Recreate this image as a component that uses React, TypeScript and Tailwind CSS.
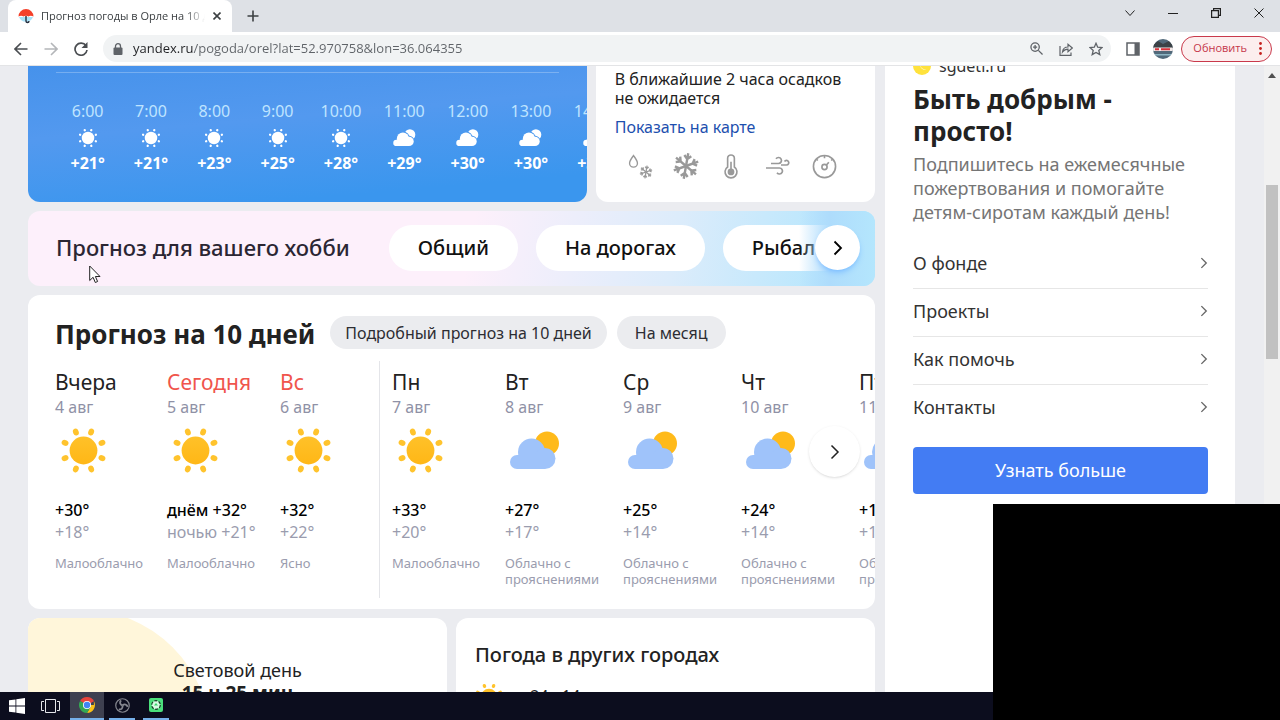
import React from "react";

type Day = {
  name: string;
  date: string;
  icon: "sun" | "cloud";
  day: string;
  night: string;
  text: string;
  red?: boolean;
  size: string;
};

const hours = [
  { time: "6:00", icon: "sun", temp: "+21°" },
  { time: "7:00", icon: "sun", temp: "+21°" },
  { time: "8:00", icon: "sun", temp: "+23°" },
  { time: "9:00", icon: "sun", temp: "+25°" },
  { time: "10:00", icon: "sun", temp: "+28°" },
  { time: "11:00", icon: "cloud", temp: "+29°" },
  { time: "12:00", icon: "cloud", temp: "+30°" },
  { time: "13:00", icon: "cloud", temp: "+30°" },
  { time: "14:00", icon: "cloud", temp: "+31°" },
];

const days: Day[] = [
  { name: "Вчера", date: "4 авг", icon: "sun", day: "+30°", night: "+18°", text: "Малооблачно", size: "w-28" },
  { name: "Сегодня", date: "5 авг", icon: "sun", day: "днём +32°", night: "ночью +21°", text: "Малооблачно", red: true, size: "w-[113px]" },
  { name: "Вс", date: "6 авг", icon: "sun", day: "+32°", night: "+22°", text: "Ясно", red: true, size: "w-[100px] border-r border-[#e4e5e9]" },
  { name: "Пн", date: "7 авг", icon: "sun", day: "+33°", night: "+20°", text: "Малооблачно", size: "w-[125px] pl-3" },
  { name: "Вт", date: "8 авг", icon: "cloud", day: "+27°", night: "+17°", text: "Облачно с прояснениями", size: "w-[118px]" },
  { name: "Ср", date: "9 авг", icon: "cloud", day: "+25°", night: "+14°", text: "Облачно с прояснениями", size: "w-[118px]" },
  { name: "Чт", date: "10 авг", icon: "cloud", day: "+24°", night: "+14°", text: "Облачно с прояснениями", size: "w-[118px]" },
  { name: "Пт", date: "11 авг", icon: "cloud", day: "+18°", night: "+12°", text: "Облачно с прояснениями", size: "w-[118px]" },
];

const fundLinks = ["О фонде", "Проекты", "Как помочь", "Контакты"];

const RAYS = [22.5, 67.5, 112.5, 157.5, 202.5, 247.5, 292.5, 337.5];

function Sun({ className, white }: { className: string; white?: boolean }) {
  const id = React.useId();
  return (
    <svg viewBox="0 0 48 48" className={className} fill={white ? "#fff" : `url(#${id})`} aria-hidden="true">
      <linearGradient id={id} gradientUnits="userSpaceOnUse" x1="24" y1="2" x2="24" y2="46">
        <stop offset="0" stopColor="#ffc42e" />
        <stop offset="1" stopColor="#ffb411" />
      </linearGradient>
      <circle cx="24" cy="24" r={white ? 15 : 14.2} />
      {RAYS.map((a) => (
        <ellipse key={a} cx="24" cy="3.6" rx="2.9" ry={white ? 2.9 : 3.6} transform={`rotate(${a} 24 24)`} />
      ))}
    </svg>
  );
}

function Cloud({ className, white }: { className: string; white?: boolean }) {
  const id = React.useId();
  const shape = (
    <>
      <circle cx="7" cy="31" r="7" />
      <circle cx="21.5" cy="21" r="13.5" />
      <circle cx="35" cy="27.5" r="10.5" />
      <path d="M7 24h28v14H7z" />
    </>
  );
  return (
    <svg viewBox="0 0 50 40" className={className} aria-hidden="true">
      <mask id={id}>
        <path d="M-5-5h60v50H-5z" fill="#fff" />
        {white && (
          <g fill="#000" stroke="#000" strokeWidth="4">
            {shape}
          </g>
        )}
      </mask>
      <circle cx="37" cy="12.5" r="12" fill={white ? "#fff" : "#ffba1a"} mask={`url(#${id})`} />
      <g fill={white ? "#fff" : "#9fc3fa"}>{shape}</g>
    </svg>
  );
}

function Flake({ className, width }: { className: string; width: number }) {
  return (
    <svg viewBox="0 0 28 28" className={className} fill="none" stroke="currentColor" strokeWidth={width} aria-hidden="true">
      {[10, 70, 130, 190, 250, 310].map((a) => (
        <path key={a} d="M14 14V1M10.500 3.500 14 7l3.500-3.500" transform={`rotate(${a} 14 14)`} />
      ))}
    </svg>
  );
}

function Chevron({ className, width = 2 }: { className: string; width?: number }) {
  return (
    <svg viewBox="0 0 10 16" className={className} fill="none" stroke="currentColor" strokeWidth={width} aria-hidden="true">
      <path d="m1.500 1.500 6.500 6.500-6.500 6.500" />
    </svg>
  );
}

function TabStrip() {
  return (
    <div className="flex h-8 items-end bg-[#dee1e6] pl-2">
      <div className="flex h-8 w-56 items-center rounded-t-lg bg-white pl-[10px] pr-[7px]">
        <svg viewBox="0 0 16 16" className="size-4 shrink-0" aria-hidden="true">
          <path d="M1 9a7.500 7.500 0 0 0 14 0z" fill="#a9e2f8" />
          <path d="M.500 8.500a7.500 7.500 0 0 1 15 0c-2-1.200-4-.9-5 0-1.500-1-3.500-1-5 0-1.200-1-3.500-1-5 0z" fill="#f4402a" />
          <path d="M8 8v5a1.500 1.500 0 0 0 3 0" fill="none" stroke="#26303f" strokeWidth="1.400" />
        </svg>
        <span className="ml-[7px] flex-1 overflow-hidden whitespace-nowrap text-[11px] text-[#3c4043] [mask-image:linear-gradient(to_right,#000_88%,transparent)]">
          Прогноз погоды в Орле на 10 дней
        </span>
        <button aria-label="Закрыть вкладку" className="ml-1 grid size-4 place-items-center text-[#3c4043]">
          <svg viewBox="0 0 8 8" className="size-2" stroke="currentColor" strokeWidth="1.600">
            <path d="m.500.500 7 7m0-7-7 7" />
          </svg>
        </button>
      </div>
      <button aria-label="Новая вкладка" className="ml-[15px] grid h-8 w-3 place-items-center text-[#3c4043]">
        <svg viewBox="0 0 12 12" className="size-3" stroke="currentColor" strokeWidth="1.600">
          <path d="M6 .500v11M.500 6h11" />
        </svg>
      </button>
      <div className="ml-auto flex h-8 text-[#222]">
        <button aria-label="Поиск вкладок" className="grid w-[43px] place-items-center pb-[6px]">
          <svg viewBox="0 0 12 12" className="size-3" fill="none" stroke="currentColor">
            <path d="m1.500 3.500 4.500 5 4.500-5" />
          </svg>
        </button>
        <button aria-label="Свернуть" className="grid w-[43px] place-items-center pb-[6px]">
          <svg viewBox="0 0 10 10" className="size-[10px]" stroke="currentColor">
            <path d="M0 5.500h10" />
          </svg>
        </button>
        <button aria-label="Восстановить" className="grid w-[43px] place-items-center pb-[6px]">
          <svg viewBox="0 0 10 10" className="size-[10px]" fill="none" stroke="currentColor" strokeWidth="1.200">
            <path d="M.600 2.600h6.800v6.800H.600zM2.600 2.600v-2h6.800v6.800h-2" />
          </svg>
        </button>
        <button aria-label="Закрыть" className="grid w-[43px] place-items-center pb-[6px]">
          <svg viewBox="0 0 10 10" className="size-[10px]" stroke="currentColor">
            <path d="m.500.500 9 9m0-9-9 9" />
          </svg>
        </button>
      </div>
    </div>
  );
}

function Toolbar() {
  return (
    <div className="flex h-[34px] items-center border-b border-[#e3e4e6] bg-white pl-[6px] pr-2 text-[#5f6368]">
      <button aria-label="Назад" className="grid w-[30px] place-items-center text-[#4a4d51]">
        <svg viewBox="0 0 14 14" className="size-[14px]" fill="none" stroke="currentColor" strokeWidth="1.600">
          <path d="M13.500 7H1.500M7 1 1 7l6 6" />
        </svg>
      </button>
      <button aria-label="Вперёд" className="grid w-[30px] place-items-center text-[#b4b6b9]">
        <svg viewBox="0 0 14 14" className="size-[14px]" fill="none" stroke="currentColor" strokeWidth="1.600">
          <path d="M.500 7h12M7 1l6 6-6 6" />
        </svg>
      </button>
      <button aria-label="Обновить страницу" className="grid w-[30px] place-items-center text-[#4a4d51]">
        <svg viewBox="0 0 14 14" className="size-[14px]" fill="none" stroke="currentColor" strokeWidth="1.700">
          <path d="M12 3.800A6 6 0 1 0 13 8" />
          <path d="M13.500 0v6h-6z" fill="currentColor" stroke="none" />
        </svg>
      </button>
      <div className="ml-[7px] flex h-[27px] flex-1 items-center rounded-full bg-[#f1f3f4] pl-[10px]">
        <svg viewBox="0 0 10 12" className="h-3 w-[10px] shrink-0" aria-hidden="true">
          <path d="M2.500 5V3.200a2.500 2.500 0 0 1 5 0V5" fill="none" stroke="currentColor" strokeWidth="1.300" />
          <rect x=".500" y="4.500" width="9" height="7.500" rx="1" fill="currentColor" />
        </svg>
        <input
          aria-label="Адресная строка"
          defaultValue="yandex.ru/pogoda/orel?lat=52.970758&lon=36.064355"
          className="ml-[10px] min-w-0 flex-1 bg-[linear-gradient(to_right,#202124_60px,#5f6368_60px)] bg-clip-text text-[13px] text-transparent outline-none"
        />
        <button aria-label="Масштаб" className="grid w-[30px] place-items-center">
          <svg viewBox="0 0 14 14" className="size-[13px]" fill="none" stroke="currentColor" strokeWidth="1.400">
            <circle cx="5.500" cy="5.500" r="4.500" />
            <path d="m9 9 4.500 4.500M5.500 3.300v4.400M3.300 5.500h4.400" />
          </svg>
        </button>
        <button aria-label="Поделиться" className="grid w-[30px] place-items-center">
          <svg viewBox="0 0 14 14" className="size-[14px]" fill="none" stroke="currentColor" strokeWidth="1.200">
            <path d="M1 4v9.300h11V10.500" />
            <path d="M3.500 10c.4-3.500 2.500-5 5.500-5V2.300L13.300 6 9 9.700V7.200c-2.300 0-4 .8-5.500 2.800z" />
          </svg>
        </button>
        <button aria-label="Добавить в закладки" className="grid w-[30px] place-items-center">
          <svg viewBox="0 0 14 14" className="size-[14px]" fill="none" stroke="currentColor" strokeWidth="1.300">
            <path d="m7 1.300 1.700 3.900 4.300.4-3.200 2.800 1 4.200L7 10.400l-3.800 2.200 1-4.200L1 5.600l4.300-.4z" />
          </svg>
        </button>
      </div>
      <button aria-label="Боковая панель" className="ml-[7px] grid w-[30px] place-items-center">
        <svg viewBox="0 0 14 14" className="size-[14px]" aria-hidden="true">
          <path d="M1 1h12v12H1z" fill="none" stroke="currentColor" strokeWidth="1.500" />
          <path d="M8.500 1H13v12H8.500z" fill="currentColor" />
        </svg>
      </button>
      <button aria-label="Профиль" className="grid w-[30px] place-items-center">
        <svg viewBox="0 0 20 20" className="size-5 overflow-hidden rounded-full" aria-hidden="true">
          <path d="M0 0h20v20H0z" fill="#51697a" />
          <path d="M0 6 5 2l5 3 6-3 4 4v3H0z" fill="#3b4247" />
          <path d="M0 8.500h20V12H0z" fill="#f3e9e9" />
          <path d="M2 9.300h4v2H2zM8 9.300h9v2H8z" fill="#d8333c" />
          <path d="M0 15h20v1.500H0z" fill="#8eb6c4" />
        </svg>
      </button>
      <button className="ml-[3px] flex h-[26px] items-center gap-3 rounded-full border border-[#c9394b] bg-[#fceeee] pl-[11px] pr-[9px] text-[11px] text-[#c5364a]">
        Обновить
        <svg viewBox="0 0 3 13" className="h-[13px] w-[3px]" fill="#c5221f" aria-hidden="true">
          <circle cx="1.500" cy="1.500" r="1.400" />
          <circle cx="1.500" cy="6.500" r="1.400" />
          <circle cx="1.500" cy="11.500" r="1.400" />
        </svg>
      </button>
    </div>
  );
}

function HourlyCard() {
  return (
    <section className="h-[136px] overflow-hidden rounded-b-xl bg-[linear-gradient(175deg,#4692eb_0%,#5399ef_40%,#3a96ee_85%)] px-7 pt-[6px]">
      <div className="h-px bg-white/25" />
      <ul className="grid w-[570px] grid-cols-9 pt-[26px]">
        {hours.map((h) => (
          <li key={h.time} className="flex flex-col items-center text-white">
            <span className="text-base leading-6 text-[#bfe4ff]">{h.time}</span>
            <span className="grid h-[30px] place-items-center">
              {h.icon === "sun" ? <Sun white className="size-5" /> : <Cloud white className="h-[18px] w-[23px]" />}
            </span>
            <span className="text-base font-bold leading-5">{h.temp}</span>
          </li>
        ))}
      </ul>
    </section>
  );
}

function PrecipitationCard() {
  return (
    <section className="h-[136px] rounded-b-xl bg-white px-[19px] pt-1 text-[#222]">
      <p className="text-base leading-[19px]">
        В ближайшие 2 часа осадков
        <br />
        не ожидается
      </p>
      <a href="#map" className="mt-[9px] block text-base leading-5 text-[#1d4fae]">
        Показать на карте
      </a>
      <div className="mt-[15px] flex items-center pl-[13px] text-[#999]">
        <button aria-label="Осадки" className="grid w-[44px] place-items-start">
          <span className="flex">
            <svg viewBox="0 0 12 16" className="h-[15px] w-[11px]" fill="none" stroke="currentColor" strokeWidth="1.500">
              <path d="M6 1.500c2.500 3.500 4.300 5.800 4.300 8.300a4.300 4.300 0 0 1-8.600 0C1.700 7.300 3.500 5 6 1.500z" />
            </svg>
            <Flake width={2.600} className="mt-[11px] size-[14px]" />
          </span>
        </button>
        <button aria-label="Снег" className="w-[51px]">
          <Flake width={2.400} className="size-[28px]" />
        </button>
        <button aria-label="Температура" className="w-[42px]">
          <svg viewBox="0 0 16 26" className="h-[25px] w-4" fill="none" stroke="currentColor" strokeWidth="1.700">
            <path d="M4.500 13.500V4.500a3.500 3.500 0 0 1 7 0v9a6.200 6.200 0 1 1-7 0z" />
            <path d="M8 8v10" />
            <circle cx="8" cy="18.700" r="3.500" fill="currentColor" stroke="none" />
          </svg>
        </button>
        <button aria-label="Ветер" className="w-[47px]">
          <svg viewBox="0 0 26 20" className="h-5 w-[26px]" fill="none" stroke="currentColor" strokeWidth="1.700">
            <path d="M6 7.500h7.500a3 3 0 1 0-2.500-4.700M1 12h13.500a3 3 0 1 1-2.500 4.700M16 9h5.500a2.300 2.300 0 1 0-2-3.500" />
          </svg>
        </button>
        <button aria-label="Давление">
          <svg viewBox="0 0 26 26" className="size-[25px]" fill="none" stroke="currentColor" strokeWidth="1.700">
            <circle cx="13" cy="13" r="11.500" />
            <circle cx="13" cy="13.500" r="2.700" />
            <path d="m14.800 11.800 2.700-3.300M13 2v2.500M4.800 5.500 6 6.800M21.200 5.500 20 6.800" />
          </svg>
        </button>
      </div>
    </section>
  );
}

function HobbyBar() {
  return (
    <section className="relative flex h-[75px] items-center overflow-hidden rounded-xl bg-[linear-gradient(100deg,#fdf0fb_0%,#fdf0fb_52%,#dcecfb_76%,#b4e6fd_96%)] pb-[2px] pl-7">
      <h2 className="shrink-0 text-[22px] font-medium text-[#2b2633]">Прогноз для вашего хобби</h2>
      <div className="ml-[39px] flex shrink-0 gap-[18px] text-xl font-medium text-[#111]">
        <button className="h-[46px] rounded-full bg-white px-[29px]">Общий</button>
        <button className="h-[46px] rounded-full bg-white px-[29px]">На дорогах</button>
        <button className="h-[46px] rounded-full bg-white px-[29px]">Рыбалка</button>
      </div>
      <div className="absolute inset-y-0 right-0 w-[76px] bg-[linear-gradient(to_right,transparent,#aedcfc_40%,#b4e6fd)]" />
      <button aria-label="Дальше" className="absolute right-[15px] grid size-[45px] place-items-center rounded-full bg-white text-black shadow-md shadow-blue-400/40">
        <Chevron width={1.800} className="h-4 w-[10px]" />
      </button>
    </section>
  );
}

function TenDays() {
  return (
    <section className="relative h-[314px] overflow-hidden rounded-xl bg-white pl-[27px] pt-[21px]">
      <div className="flex h-[33px] items-center">
        <h2 className="pt-[3px] text-[26px] font-bold text-[#222]">Прогноз на 10 дней</h2>
        <a href="#details" className="ml-[15px] flex h-[33px] items-center rounded-full bg-[#ebecef] px-[15px] text-base text-[#2d2d33]">
          Подробный прогноз на 10 дней
        </a>
        <a href="#month" className="ml-[10px] flex h-[33px] items-center rounded-full bg-[#ebecef] px-[18px] text-base text-[#2d2d33]">
          На месяц
        </a>
      </div>
      <ul className="mt-3 flex h-[237px]">
        {days.map((d) => (
          <li key={d.date} className={`shrink-0 pt-2 ${d.size}`}>
            <div className={`text-[21px] leading-[26px] ${d.red ? "text-[#f0554c]" : "text-[#222]"}`}>{d.name}</div>
            <div className="text-base leading-6 text-[#8f91a6]">{d.date}</div>
            <div className="flex h-[63px] items-center pl-[5px]">
              {d.icon === "sun" ? <Sun className="size-[47px]" /> : <Cloud className="h-10 w-[50px]" />}
            </div>
            <div className="mt-[17px] text-base font-medium leading-[22px] text-black">{d.day}</div>
            <div className="text-base leading-[22px] text-[#9a9cae]">{d.night}</div>
            <div className="mt-3 w-[100px] text-[13px] leading-4 text-[#9a9cae]">{d.text}</div>
          </li>
        ))}
      </ul>
      <button aria-label="Следующие дни" className="absolute right-[15px] top-[131px] grid size-[51px] place-items-center rounded-full bg-white text-[#222] shadow">
        <Chevron width={1.500} className="h-4 w-[10px]" />
      </button>
    </section>
  );
}

function FundPanel() {
  return (
    <aside className="w-[350px] shrink-0 overflow-hidden bg-white pl-7 pr-[27px] text-[#333]">
      <div className="-mt-3 flex h-6 items-center gap-2">
        <svg viewBox="0 0 20 20" className="size-[18px]" aria-hidden="true">
          <circle cx="10" cy="10" r="10" fill="#ffe23c" />
          <path d="M8 7a6 6 0 0 0 8 7 6.500 6.500 0 0 1-8-7z" fill="#fff9d6" />
        </svg>
        <span className="text-base leading-5">sgdeti.ru</span>
      </div>
      <h2 className="mt-[5px] text-[26px] font-bold leading-8 text-[#222]">
        Быть добрым -
        <br />
        просто!
      </h2>
      <p className="mt-[5px] text-lg leading-6 text-[#757575]">
        Подпишитесь на ежемесячные
        <br />
        пожертвования и помогайте
        <br />
        детям-сиротам каждый день!
      </p>
      <nav className="mt-[17px] divide-y divide-[#e6e6e6]">
        {fundLinks.map((l) => (
          <a key={l} href="#fund" className="flex h-12 items-center justify-between pb-1 text-lg">
            {l}
            <Chevron width={1.800} className="h-3 w-2 text-[#666]" />
          </a>
        ))}
      </nav>
      <button className="mt-[14px] h-[47px] w-full rounded bg-[#437cf3] pb-[2px] text-lg text-white">Узнать больше</button>
    </aside>
  );
}

function Taskbar() {
  return (
    <footer className="flex h-7 shrink-0 items-stretch bg-[#0c0d1e]">
      <button aria-label="Пуск" className="grid w-[34px] place-items-center">
        <svg viewBox="0 0 16 16" className="size-4" fill="#fff">
          <path d="M0 2.300 6.500 1.400v6.200H0zM7.300 1.300 16 0v7.600H7.300zM0 8.400h6.500v6.200L0 13.700zM7.300 8.400H16V16l-8.700-1.300z" />
        </svg>
      </button>
      <button aria-label="Представление задач" className="grid w-9 place-items-center pr-[3px]">
        <svg viewBox="0 0 19 14" className="h-[14px] w-[19px]" fill="none" stroke="#e5e6ea">
          <path d="M4.500.500h10v13h-10zM3 2.500H.500v9H3M16 2.500h2.500v9H16" />
        </svg>
      </button>
      <button aria-label="Chrome" className="grid w-[34px] place-items-center border-b-2 border-[#76b0ea] bg-[#3e4050]">
        <svg viewBox="0 0 16 16" className="size-4">
          <path d="M8 8 1.070 4A8 8 0 0 1 14.930 4z" fill="#e8453c" />
          <path d="M8 8h6.900V4A8 8 0 0 1 8 16l3.500-6z" fill="#fbc116" />
          <path d="M8 8 1.070 4A8 8 0 0 0 8 16l3.500-6z" fill="#34a853" />
          <path d="M8 4h6.930L8 8z" fill="#e8453c" />
          <circle cx="8" cy="8" r="4" fill="#fff" />
          <circle cx="8" cy="8" r="3.200" fill="#4285f4" />
        </svg>
      </button>
      <button aria-label="OBS" className="ml-[5px] grid w-[26px] place-items-center border-b-2 border-[#76b0ea]">
        <svg viewBox="0 0 16 16" className="size-[15px]" fill="none" stroke="#84868e">
          <circle cx="8" cy="8" r="7.200" strokeWidth="1.300" />
          {[0, 120, 240].map((a) => (
            <path key={a} d="M8 8C5.200 7.200 4.600 4.500 6.500 2.500" strokeWidth="2" transform={`rotate(${a} 8 8)`} />
          ))}
        </svg>
      </button>
      <button aria-label="Запись" className="ml-2 grid w-[26px] place-items-center border-b-2 border-[#76b0ea]">
        <svg viewBox="0 0 14 14" className="size-[14px]">
          <rect width="14" height="14" rx="2" fill="#4be07c" />
          <circle cx="7" cy="7" r="4.300" fill="#d9fbe4" />
          <circle cx="7" cy="7" r="4.300" fill="none" stroke="#173c24" strokeWidth="1.200" strokeDasharray="3 1.500" />
          <path d="M5 7.500 7 5l2 2.500z" fill="#3bd36a" />
        </svg>
      </button>
    </footer>
  );
}

export default function App() {
  return (
    <div className="relative flex h-screen flex-col overflow-hidden bg-white font-['Noto_Sans','Open_Sans',sans-serif]">
      <header className="shrink-0 font-['Open_Sans','Noto_Sans',sans-serif]">
        <TabStrip />
        <Toolbar />
      </header>

      <div className="flex min-h-0 flex-1 bg-[#ebecf0]">
        <main className="flex min-w-0 flex-1 flex-col gap-[9px] overflow-hidden pl-7 pr-[10px]">
          <div className="grid shrink-0 grid-cols-[minmax(0,2fr)_minmax(0,1fr)] gap-[9px]">
            <HourlyCard />
            <PrecipitationCard />
          </div>
          <div className="shrink-0">
            <HobbyBar />
          </div>
          <div className="shrink-0">
            <TenDays />
          </div>
          <div className="grid shrink-0 grid-cols-2 gap-[9px]">
            <section className="relative h-40 overflow-hidden rounded-xl bg-white pt-10 text-center text-lg leading-6 text-[#222]">
              <svg viewBox="0 0 200 160" className="absolute left-0 top-0 h-40 w-[200px]" aria-hidden="true">
                <circle cx="52" cy="122" r="131" fill="#fff6da" />
              </svg>
              <div className="relative">Световой день</div>
              <div className="relative text-[19px] font-bold leading-[22px]">15 ч 25 мин</div>
            </section>
            <section className="h-40 rounded-xl bg-white px-[19px] pt-[25px] text-[#222]">
              <h3 className="text-xl font-medium leading-6">Погода в других городах</h3>
              <div className="mt-4 flex items-center">
                <Sun className="size-7" />
                <span className="ml-[18px] pb-[2px] text-base">+24 +14</span>
              </div>
            </section>
          </div>
        </main>

        <FundPanel />

        <div className="w-[29px] shrink-0" />
        <div className="flex w-4 shrink-0 flex-col items-center bg-[#f1f1f1]">
          <svg viewBox="0 0 8 5" className="mt-[7px] h-[5px] w-2" fill="#505050" aria-hidden="true">
            <path d="m4 0 4 5H0z" />
          </svg>
          <div className="mt-[107px] h-[174px] w-3 bg-[#c1c1c1]" />
        </div>
      </div>

      <Taskbar />

      {/* camera overlay */}
      <div className="absolute bottom-0 right-0 h-[216px] w-[287px] bg-black" />

      {/* mouse pointer */}
      <svg viewBox="0 0 12 19" className="absolute left-[89px] top-[265px] h-[19px] w-3" fill="#fff" stroke="#222" aria-hidden="true">
        <path d="M.700 1v14.500l3.400-3.200 2.200 5.200 2.300-1-2.200-5h4.600z" />
      </svg>
    </div>
  );
}
